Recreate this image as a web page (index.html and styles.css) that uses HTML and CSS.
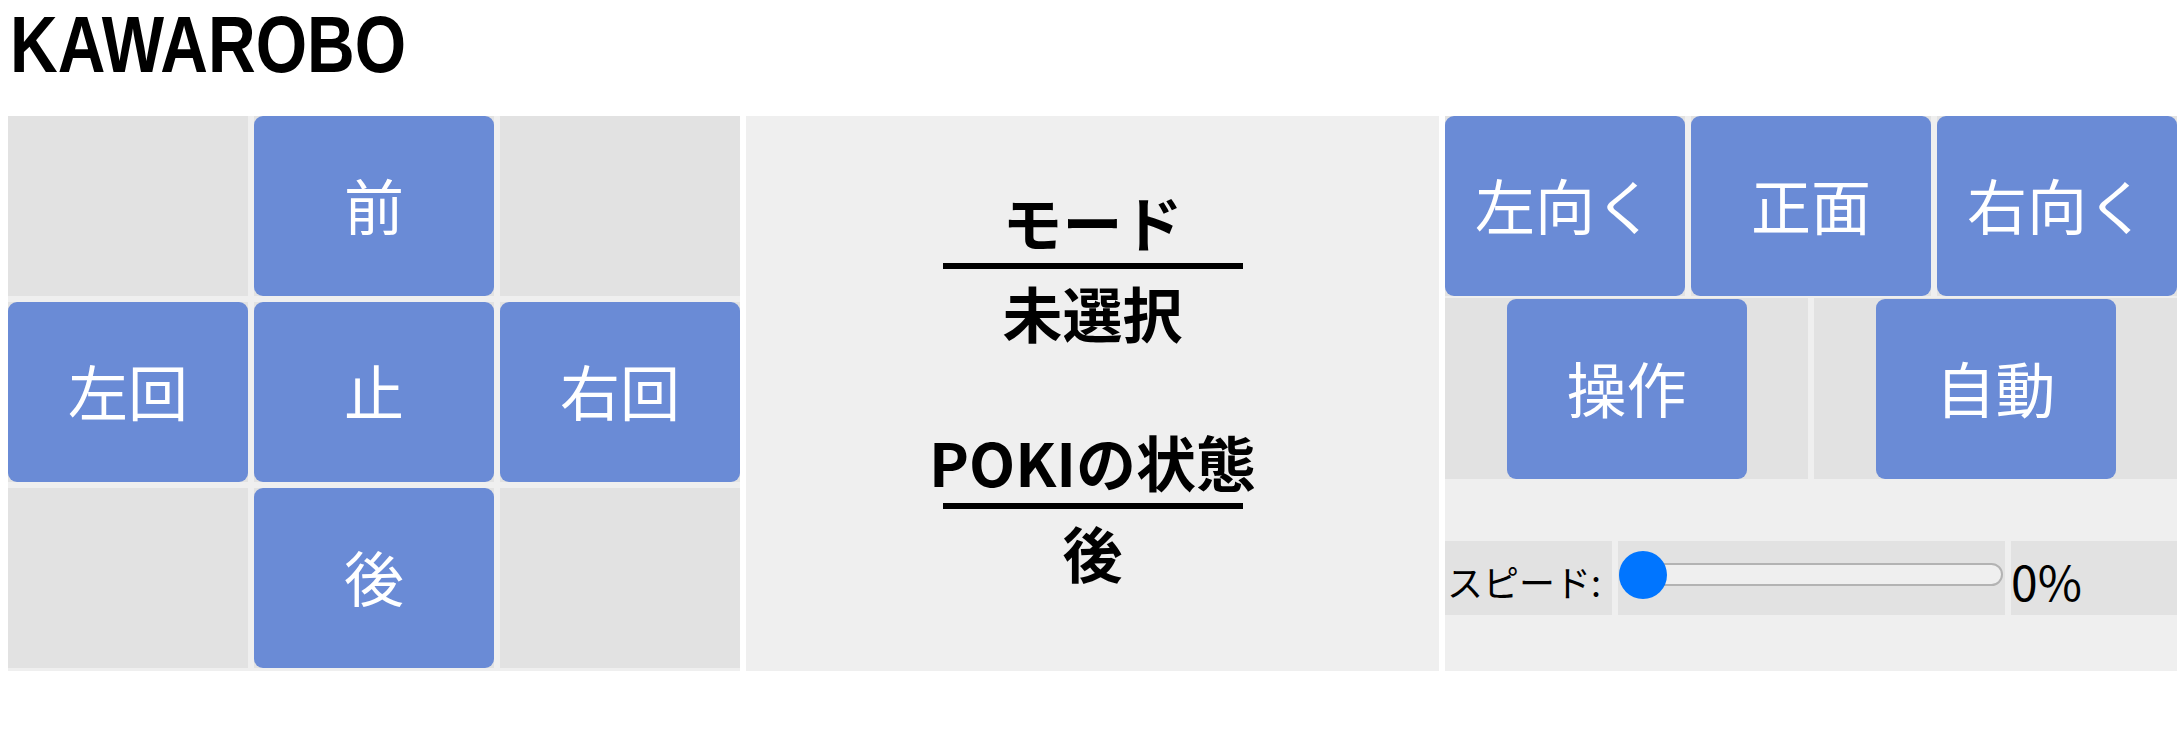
FILE: index.html
```html
<!DOCTYPE html>
<html lang="ja">
<head>
<meta charset="utf-8">
<title>KAWAROBO</title>
<link rel="stylesheet" href="styles.css">
</head>
<body>
<h1 class="title"><span class="title-text">KAWAROBO</span></h1>
<main class="panels">
  <section class="pad">
    <div class="cell"></div>
    <div class="cell"><button class="btn">前</button></div>
    <div class="cell"></div>
    <div class="cell"><button class="btn">左回</button></div>
    <div class="cell"><button class="btn">止</button></div>
    <div class="cell"><button class="btn">右回</button></div>
    <div class="cell"></div>
    <div class="cell"><button class="btn">後</button></div>
    <div class="cell"></div>
  </section>
  <section class="status">
    <div class="stat">
      <div class="stat-label">モード</div>
      <div class="stat-rule"></div>
      <div class="stat-value">未選択</div>
    </div>
    <div class="stat stat-second">
      <div class="stat-label">POKIの状態</div>
      <div class="stat-rule"></div>
      <div class="stat-value">後</div>
    </div>
  </section>
  <section class="side">
    <div class="face-row">
      <div class="cell"><button class="btn">左向く</button></div>
      <div class="cell"><button class="btn">正面</button></div>
      <div class="cell"><button class="btn">右向く</button></div>
    </div>
    <div class="mode-row">
      <div class="mode-cell"><button class="btn btn-fixed">操作</button></div>
      <div class="mode-cell"><button class="btn btn-fixed">自動</button></div>
    </div>
    <div class="speed-wrap">
      <div class="speed-row">
        <div class="speed-cell speed-label">スピード:</div>
        <div class="speed-cell speed-slider"><input class="range" type="range" min="0" max="100" value="0"></div>
        <div class="speed-cell speed-value">0%</div>
      </div>
    </div>
  </section>
</main>
</body>
</html>
```
FILE: styles.css
```css
body {
  margin: 0;
  padding: 0 8px 8px;
  font-family: "Noto Sans CJK JP", "Noto Sans", sans-serif;
  color: #000;
  background: #fff;
}

.title {
  margin: 0 0 27px 2px;
  font-family: "Liberation Sans", Arial, sans-serif;
  font-size: 80px;
  line-height: 89px;
  font-weight: 700;
}

.title-text {
  display: inline-block;
  transform: scaleX(0.825);
  transform-origin: left center;
}

.panels {
  display: flex;
  gap: 6px;
  width: 2169px;
  height: 555px;
}

.pad {
  width: 732px;
  flex: none;
  background: #efefef;
  display: grid;
  grid-template-columns: repeat(3, 240px);
  grid-template-rows: repeat(3, 180px);
  gap: 6px;
  align-content: start;
}

.cell {
  background: #e2e2e2;
  display: flex;
}

.btn {
  flex: 1;
  margin: 0;
  padding: 0 0 5px;
  border: none;
  border-radius: 9px;
  background: #6a8bd6;
  color: #fff;
  font-family: "Noto Sans CJK JP", sans-serif;
  font-size: 60px;
  font-weight: 400;
}

.status {
  width: 693px;
  flex: none;
  background: #efefef;
  display: flex;
  flex-direction: column;
  align-items: center;
  padding-top: 69px;
  box-sizing: border-box;
}

.stat {
  display: flex;
  flex-direction: column;
  align-items: center;
}

.stat-second {
  margin-top: 77px;
}

.stat-label,
.stat-value {
  font-size: 60px;
  font-weight: 700;
  line-height: 72px;
  white-space: nowrap;
}

.stat-rule {
  width: 300px;
  height: 6px;
  margin-top: 6px;
  background: #000;
}

.stat-value {
  margin-top: 7px;
}

.side {
  width: 732px;
  flex: none;
  background: #efefef;
  display: flex;
  flex-direction: column;
}

.face-row {
  display: grid;
  grid-template-columns: repeat(3, 240px);
  grid-template-rows: 180px;
  gap: 6px;
}

.mode-row {
  margin-top: 2px;
  display: grid;
  grid-template-columns: repeat(2, 1fr);
  gap: 6px;
  height: 181px;
}

.mode-cell {
  background: #e2e2e2;
  display: flex;
  justify-content: center;
  align-items: flex-end;
}

.btn-fixed {
  flex: none;
  width: 240px;
  height: 180px;
}

.speed-wrap {
  flex: 1;
  display: flex;
  align-items: center;
}

.speed-row {
  width: 100%;
  height: 69px;
  display: grid;
  grid-template-columns: 167px 387px 166px;
  gap: 6px;
}

.speed-cell {
  background: #e2e2e2;
  display: flex;
  align-items: center;
}

.speed-label {
  font-size: 36px;
  padding-left: 2px;
  padding-top: 6px;
  box-sizing: border-box;
  white-space: nowrap;
}

.speed-slider {
  padding-bottom: 6px;
  box-sizing: border-box;
}

.speed-value {
  font-size: 48px;
  font-weight: 400;
  padding-top: 4px;
  box-sizing: border-box;
}

.range {
  -webkit-appearance: none;
  appearance: none;
  width: 384px;
  height: 48px;
  margin: 0 0 0 1px;
  padding: 0;
  background: transparent;
}

.range::-webkit-slider-runnable-track {
  height: 23px;
  box-sizing: border-box;
  border: 2px solid #b3b3b3;
  border-radius: 12px;
  background: #efefef;
}

.range::-webkit-slider-thumb {
  -webkit-appearance: none;
  appearance: none;
  width: 48px;
  height: 48px;
  margin-top: -14.5px;
  margin-left: -2px;
  border: none;
  border-radius: 50%;
  background: #0075ff;
}
```
